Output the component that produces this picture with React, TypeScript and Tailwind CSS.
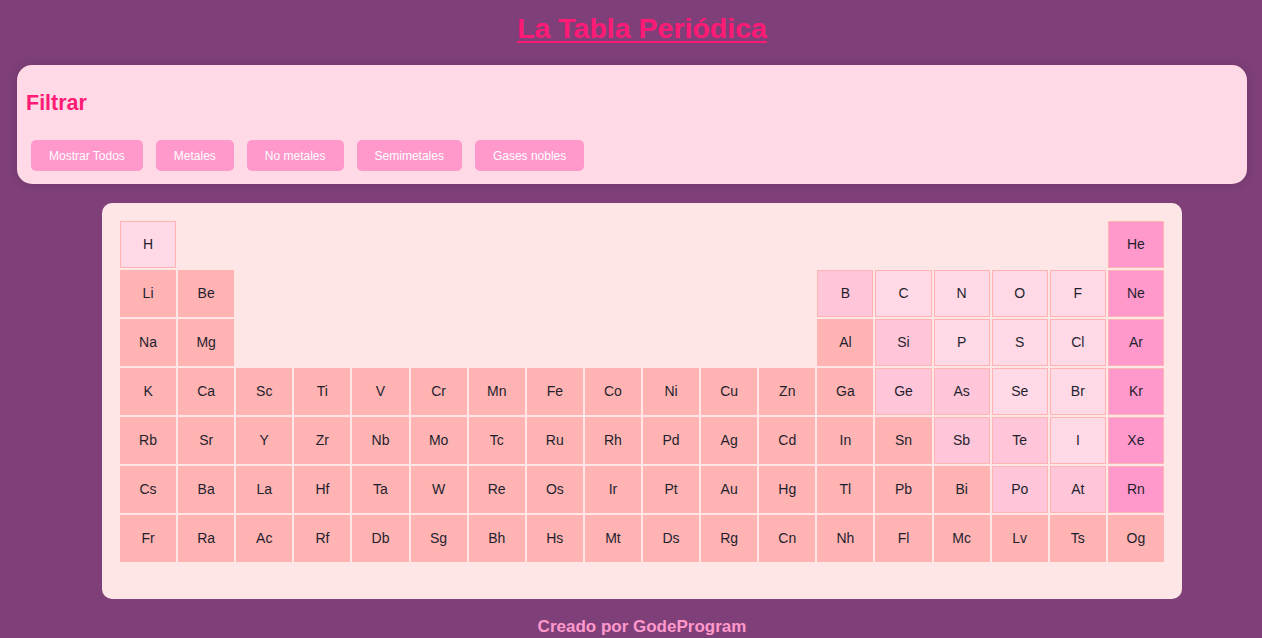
import React from 'react';

type Kind = 'm' | 'n' | 's' | 'g';

const kinds: Record<string, Kind> = {
  H: 'n', C: 'n', N: 'n', O: 'n', F: 'n', P: 'n', S: 'n', Cl: 'n', Se: 'n', Br: 'n', I: 'n',
  B: 's', Si: 's', Ge: 's', As: 's', Sb: 's', Te: 's', Po: 's', At: 's',
  He: 'g', Ne: 'g', Ar: 'g', Kr: 'g', Xe: 'g', Rn: 'g',
};

const blanks = (n: number) => Array.from({ length: n }, () => '');

const rows: string[][] = [
  ['H', ...blanks(16), 'He'],
  ['Li', 'Be', ...blanks(10), 'B', 'C', 'N', 'O', 'F', 'Ne'],
  ['Na', 'Mg', ...blanks(10), 'Al', 'Si', 'P', 'S', 'Cl', 'Ar'],
  ['K', 'Ca', 'Sc', 'Ti', 'V', 'Cr', 'Mn', 'Fe', 'Co', 'Ni', 'Cu', 'Zn', 'Ga', 'Ge', 'As', 'Se', 'Br', 'Kr'],
  ['Rb', 'Sr', 'Y', 'Zr', 'Nb', 'Mo', 'Tc', 'Ru', 'Rh', 'Pd', 'Ag', 'Cd', 'In', 'Sn', 'Sb', 'Te', 'I', 'Xe'],
  ['Cs', 'Ba', 'La', 'Hf', 'Ta', 'W', 'Re', 'Os', 'Ir', 'Pt', 'Au', 'Hg', 'Tl', 'Pb', 'Bi', 'Po', 'At', 'Rn'],
  ['Fr', 'Ra', 'Ac', 'Rf', 'Db', 'Sg', 'Bh', 'Hs', 'Mt', 'Ds', 'Rg', 'Cn', 'Nh', 'Fl', 'Mc', 'Lv', 'Ts', 'Og'],
];

const bgFor: Record<Kind, string> = {
  m: 'bg-[#ffb3b3]',
  n: 'bg-[#ffd9e6]',
  s: 'bg-[#ffc6d9]',
  g: 'bg-[#ff99cc]',
};

const filters = ['Mostrar Todos', 'Metales', 'No metales', 'Semimetales', 'Gases nobles'];

function Cell({ symbol }: { symbol: string }) {
  if (!symbol) return <div />;
  const kind = kinds[symbol] ?? 'm';
  return (
    <div
      className={`flex items-center justify-center border border-[#ffb3b3] text-[14px] text-[#1f1f2e] ${bgFor[kind]}`}
    >
      {symbol}
    </div>
  );
}

export default function App() {
  return (
    <div
      className="min-h-screen bg-[#7f3f79] pt-3 pb-2"
      style={{ fontFamily: '"Liberation Sans", Arial, sans-serif' }}
    >
      <div className="pl-[22px] text-center">
        <h1 className="text-[28.5px] leading-[32px] font-bold text-[#ff1a75] underline underline-offset-[3px]">
          La Tabla Periódica
        </h1>
      </div>

      <section className="mt-[21px] ml-[17px] mr-[15px] rounded-[15px] bg-[#ffd9e6] px-[9px] pt-[26px] pb-[13px] shadow-[0_0_8px_rgba(0,0,0,0.15)]">
        <h2 className="text-[21.5px] leading-[25px] font-bold text-[#ff1a75]">Filtrar</h2>
        <div className="mt-[24px] flex gap-[13px] pl-[5px]">
          {filters.map((f) => (
            <button
              key={f}
              className="h-[31px] rounded-[5px] bg-[#ff99cc] px-[18px] text-[12px] text-white"
            >
              {f}
            </button>
          ))}
        </div>
      </section>

      <div className="pl-[22px] mt-[19px]">
        <div className="mx-auto w-[1080px] rounded-[10px] bg-[#ffe6e6] px-[18px] pt-[18px] pb-[37px]">
          <div className="grid grid-cols-[repeat(18,1fr)] auto-rows-[47px] gap-x-[2px] gap-y-[2px]">
            {rows.map((row, r) =>
              row.map((sym, c) => <Cell key={`${r}-${c}`} symbol={sym} />)
            )}
          </div>
        </div>
      </div>

      <p className="pl-[22px] mt-[15px] text-center text-[17px] font-bold text-[#ff99cc]">
        Creado por GodeProgram
      </p>
    </div>
  );
}
